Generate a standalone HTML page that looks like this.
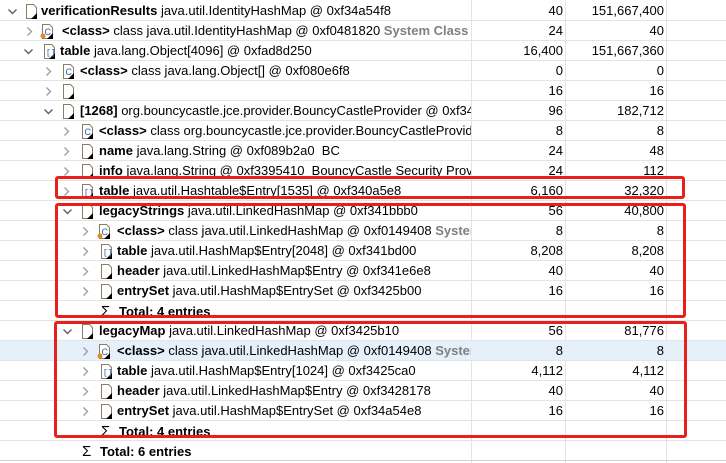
<!DOCTYPE html>
<html><head><meta charset="utf-8"><style>
body{margin:0;width:726px;height:463px;overflow:hidden;background:#fff;font-family:"Liberation Sans",sans-serif;font-size:13px;color:#000;position:relative}
.r{position:absolute;left:0;width:726px;height:20px;border-bottom:1px solid #e4e4e4;box-sizing:border-box}
.hl{background:#e5f0fb}
.c1{position:absolute;left:0;top:0;width:471px;height:19px;overflow:hidden;white-space:nowrap}
.t{position:absolute;top:2px;line-height:16px}
.n1,.n2{position:absolute;top:2px;line-height:16px;text-align:right}
.n1{right:163px}.n2{right:62px}
.sep{position:absolute;top:0;width:1px;height:463px;background:#e4e4e4}
b{font-weight:bold}
.sys{color:#808080;font-weight:bold}
svg{position:absolute;overflow:visible}
.box{position:absolute;border:3px solid #e8201c;border-radius:3px;box-sizing:border-box}
.sg{position:absolute;top:3px;font-size:15px;line-height:16px}
</style></head><body>
<div class="sep" style="left:471px"></div>
<div class="sep" style="left:565px"></div>
<div class="sep" style="left:666px"></div>

<div class="r" style="top:1px"><div class="c1"><svg style="left:8px;top:8px" width="9" height="6"><path d="M0.5 0.5L4.5 4.5L8.5 0.5" fill="none" stroke="#606060" stroke-width="1.4"/></svg><svg style="left:26px;top:3px" width="12" height="16"><path d="M0.5 0.5H7.5L10.5 3.5V14.5H0.5Z" fill="#fff" stroke="#8a7d60"/><path d="M5 15H11V9Z" fill="#000"/></svg><span class="t" style="left:41px"><b>verificationResults</b> java.util.IdentityHashMap @ 0xf34a54f8</span></div><span class="n1">40</span><span class="n2">151,667,400</span></div>

<div class="r" style="top:21px"><div class="c1"><svg style="left:27px;top:6px" width="6" height="10"><path d="M0.5 0.5L4.5 4.5L0.5 8.5" fill="none" stroke="#a0a0a0" stroke-width="1.4"/></svg><svg style="left:40px;top:3px" width="14" height="16"><path d="M2.5 0.5H9.5L12.5 3.5V14.5H2.5Z" fill="#fff" stroke="#8a7d60"/><path d="M7 15H13V9Z" fill="#000"/><text x="4.5" y="11" font-size="9" fill="#2a5db0" font-family="Liberation Sans">C</text><circle cx="3" cy="12" r="2.5" fill="#e08a2c"/></svg><span class="t" style="left:62px"><b>&lt;class&gt;</b> class java.util.IdentityHashMap @ 0xf0481820 <span class="sys">System Class</span></span></div><span class="n1">24</span><span class="n2">40</span></div>

<div class="r" style="top:41px"><div class="c1"><svg style="left:24px;top:8px" width="9" height="6"><path d="M0.5 0.5L4.5 4.5L8.5 0.5" fill="none" stroke="#606060" stroke-width="1.4"/></svg><svg style="left:44px;top:3px" width="12" height="16"><path d="M0.5 0.5H7.5L10.5 3.5V14.5H0.5Z" fill="#fff" stroke="#8a7d60"/><path d="M5 15H11V9Z" fill="#000"/><text x="2" y="11" font-size="8" fill="#2a5db0" font-family="Liberation Mono">[]</text></svg><span class="t" style="left:60px"><b>table</b> java.lang.Object[4096] @ 0xfad8d250</span></div><span class="n1">16,400</span><span class="n2">151,667,360</span></div>

<div class="r" style="top:61px"><div class="c1"><svg style="left:46px;top:6px" width="6" height="10"><path d="M0.5 0.5L4.5 4.5L0.5 8.5" fill="none" stroke="#a0a0a0" stroke-width="1.4"/></svg><svg style="left:63px;top:3px" width="12" height="16"><path d="M0.5 0.5H7.5L10.5 3.5V14.5H0.5Z" fill="#fff" stroke="#8a7d60"/><path d="M5 15H11V9Z" fill="#000"/><text x="2.5" y="11" font-size="9" fill="#2a5db0" font-family="Liberation Sans">C</text></svg><span class="t" style="left:80px"><b>&lt;class&gt;</b> class java.lang.Object[] @ 0xf080e6f8</span></div><span class="n1">0</span><span class="n2">0</span></div>

<div class="r" style="top:81px"><div class="c1"><svg style="left:46px;top:6px" width="6" height="10"><path d="M0.5 0.5L4.5 4.5L0.5 8.5" fill="none" stroke="#a0a0a0" stroke-width="1.4"/></svg><svg style="left:63px;top:3px" width="12" height="16"><path d="M0.5 0.5H7.5L10.5 3.5V14.5H0.5Z" fill="#fff" stroke="#8a7d60"/><path d="M5 15H11V9Z" fill="#000"/></svg></div><span class="n1">16</span><span class="n2">16</span></div>

<div class="r" style="top:101px"><div class="c1"><svg style="left:44px;top:8px" width="9" height="6"><path d="M0.5 0.5L4.5 4.5L8.5 0.5" fill="none" stroke="#606060" stroke-width="1.4"/></svg><svg style="left:63px;top:3px" width="12" height="16"><path d="M0.5 0.5H7.5L10.5 3.5V14.5H0.5Z" fill="#fff" stroke="#8a7d60"/><path d="M5 15H11V9Z" fill="#000"/></svg><span class="t" style="left:80px"><b>[1268]</b> org.bouncycastle.jce.provider.BouncyCastleProvider @ 0xf34a5</span></div><span class="n1">96</span><span class="n2">182,712</span></div>

<div class="r" style="top:121px"><div class="c1"><svg style="left:64px;top:6px" width="6" height="10"><path d="M0.5 0.5L4.5 4.5L0.5 8.5" fill="none" stroke="#a0a0a0" stroke-width="1.4"/></svg><svg style="left:82px;top:3px" width="12" height="16"><path d="M0.5 0.5H7.5L10.5 3.5V14.5H0.5Z" fill="#fff" stroke="#8a7d60"/><path d="M5 15H11V9Z" fill="#000"/><text x="2.5" y="11" font-size="9" fill="#2a5db0" font-family="Liberation Sans">C</text></svg><span class="t" style="left:99px"><b>&lt;class&gt;</b> class org.bouncycastle.jce.provider.BouncyCastleProvider</span></div><span class="n1">8</span><span class="n2">8</span></div>

<div class="r" style="top:141px"><div class="c1"><svg style="left:64px;top:6px" width="6" height="10"><path d="M0.5 0.5L4.5 4.5L0.5 8.5" fill="none" stroke="#a0a0a0" stroke-width="1.4"/></svg><svg style="left:82px;top:3px" width="12" height="16"><path d="M0.5 0.5H7.5L10.5 3.5V14.5H0.5Z" fill="#fff" stroke="#8a7d60"/><path d="M5 15H11V9Z" fill="#000"/></svg><span class="t" style="left:99px"><b>name</b> java.lang.String @ 0xf089b2a0&nbsp; BC</span></div><span class="n1">24</span><span class="n2">48</span></div>

<div class="r" style="top:161px"><div class="c1"><svg style="left:64px;top:6px" width="6" height="10"><path d="M0.5 0.5L4.5 4.5L0.5 8.5" fill="none" stroke="#a0a0a0" stroke-width="1.4"/></svg><svg style="left:82px;top:3px" width="12" height="16"><path d="M0.5 0.5H7.5L10.5 3.5V14.5H0.5Z" fill="#fff" stroke="#8a7d60"/><path d="M5 15H11V9Z" fill="#000"/></svg><span class="t" style="left:99px"><b>info</b> java.lang.String @ 0xf3395410&nbsp; BouncyCastle Security Provider</span></div><span class="n1">24</span><span class="n2">112</span></div>

<div class="r" style="top:181px"><div class="c1"><svg style="left:64px;top:6px" width="6" height="10"><path d="M0.5 0.5L4.5 4.5L0.5 8.5" fill="none" stroke="#a0a0a0" stroke-width="1.4"/></svg><svg style="left:82px;top:3px" width="12" height="16"><path d="M0.5 0.5H7.5L10.5 3.5V14.5H0.5Z" fill="#fff" stroke="#8a7d60"/><path d="M5 15H11V9Z" fill="#000"/><text x="2" y="11" font-size="8" fill="#2a5db0" font-family="Liberation Mono">[]</text></svg><span class="t" style="left:99px"><b>table</b> java.util.Hashtable$Entry[1535] @ 0xf340a5e8</span></div><span class="n1">6,160</span><span class="n2">32,320</span></div>

<div class="r" style="top:201px"><div class="c1"><svg style="left:63px;top:8px" width="9" height="6"><path d="M0.5 0.5L4.5 4.5L8.5 0.5" fill="none" stroke="#606060" stroke-width="1.4"/></svg><svg style="left:82px;top:3px" width="12" height="16"><path d="M0.5 0.5H7.5L10.5 3.5V14.5H0.5Z" fill="#fff" stroke="#8a7d60"/><path d="M5 15H11V9Z" fill="#000"/></svg><span class="t" style="left:99px"><b>legacyStrings</b> java.util.LinkedHashMap @ 0xf341bbb0</span></div><span class="n1">56</span><span class="n2">40,800</span></div>

<div class="r" style="top:221px"><div class="c1"><svg style="left:83px;top:6px" width="6" height="10"><path d="M0.5 0.5L4.5 4.5L0.5 8.5" fill="none" stroke="#a0a0a0" stroke-width="1.4"/></svg><svg style="left:97px;top:3px" width="14" height="16"><path d="M2.5 0.5H9.5L12.5 3.5V14.5H2.5Z" fill="#fff" stroke="#8a7d60"/><path d="M7 15H13V9Z" fill="#000"/><text x="4.5" y="11" font-size="9" fill="#2a5db0" font-family="Liberation Sans">C</text><circle cx="3" cy="12" r="2.5" fill="#e08a2c"/></svg><span class="t" style="left:117px"><b>&lt;class&gt;</b> class java.util.LinkedHashMap @ 0xf0149408 <span class="sys">System Class</span></span></div><span class="n1">8</span><span class="n2">8</span></div>

<div class="r" style="top:241px"><div class="c1"><svg style="left:83px;top:6px" width="6" height="10"><path d="M0.5 0.5L4.5 4.5L0.5 8.5" fill="none" stroke="#a0a0a0" stroke-width="1.4"/></svg><svg style="left:101px;top:3px" width="12" height="16"><path d="M0.5 0.5H7.5L10.5 3.5V14.5H0.5Z" fill="#fff" stroke="#8a7d60"/><path d="M5 15H11V9Z" fill="#000"/><text x="2" y="11" font-size="8" fill="#2a5db0" font-family="Liberation Mono">[]</text></svg><span class="t" style="left:117px"><b>table</b> java.util.HashMap$Entry[2048] @ 0xf341bd00</span></div><span class="n1">8,208</span><span class="n2">8,208</span></div>

<div class="r" style="top:261px"><div class="c1"><svg style="left:83px;top:6px" width="6" height="10"><path d="M0.5 0.5L4.5 4.5L0.5 8.5" fill="none" stroke="#a0a0a0" stroke-width="1.4"/></svg><svg style="left:101px;top:3px" width="12" height="16"><path d="M0.5 0.5H7.5L10.5 3.5V14.5H0.5Z" fill="#fff" stroke="#8a7d60"/><path d="M5 15H11V9Z" fill="#000"/></svg><span class="t" style="left:117px"><b>header</b> java.util.LinkedHashMap$Entry @ 0xf341e6e8</span></div><span class="n1">40</span><span class="n2">40</span></div>

<div class="r" style="top:281px"><div class="c1"><svg style="left:83px;top:6px" width="6" height="10"><path d="M0.5 0.5L4.5 4.5L0.5 8.5" fill="none" stroke="#a0a0a0" stroke-width="1.4"/></svg><svg style="left:101px;top:3px" width="12" height="16"><path d="M0.5 0.5H7.5L10.5 3.5V14.5H0.5Z" fill="#fff" stroke="#8a7d60"/><path d="M5 15H11V9Z" fill="#000"/></svg><span class="t" style="left:117px"><b>entrySet</b> java.util.HashMap$EntrySet @ 0xf3425b00</span></div><span class="n1">16</span><span class="n2">16</span></div>

<div class="r" style="top:301px"><div class="c1"><span class="sg" style="left:101px">Σ</span><span class="t" style="left:119px;top:3px"><b>Total: 4 entries</b></span></div></div>

<div class="r" style="top:321px"><div class="c1"><svg style="left:63px;top:8px" width="9" height="6"><path d="M0.5 0.5L4.5 4.5L8.5 0.5" fill="none" stroke="#606060" stroke-width="1.4"/></svg><svg style="left:82px;top:3px" width="12" height="16"><path d="M0.5 0.5H7.5L10.5 3.5V14.5H0.5Z" fill="#fff" stroke="#8a7d60"/><path d="M5 15H11V9Z" fill="#000"/></svg><span class="t" style="left:99px"><b>legacyMap</b> java.util.LinkedHashMap @ 0xf3425b10</span></div><span class="n1">56</span><span class="n2">81,776</span></div>

<div class="r hl" style="top:341px"><div class="c1"><svg style="left:83px;top:6px" width="6" height="10"><path d="M0.5 0.5L4.5 4.5L0.5 8.5" fill="none" stroke="#a0a0a0" stroke-width="1.4"/></svg><svg style="left:97px;top:3px" width="14" height="16"><path d="M2.5 0.5H9.5L12.5 3.5V14.5H2.5Z" fill="#fff" stroke="#8a7d60"/><path d="M7 15H13V9Z" fill="#000"/><text x="4.5" y="11" font-size="9" fill="#2a5db0" font-family="Liberation Sans">C</text><circle cx="3" cy="12" r="2.5" fill="#e08a2c"/></svg><span class="t" style="left:117px"><b>&lt;class&gt;</b> class java.util.LinkedHashMap @ 0xf0149408 <span class="sys">System Class</span></span></div><span class="n1">8</span><span class="n2">8</span></div>

<div class="r" style="top:361px"><div class="c1"><svg style="left:83px;top:6px" width="6" height="10"><path d="M0.5 0.5L4.5 4.5L0.5 8.5" fill="none" stroke="#a0a0a0" stroke-width="1.4"/></svg><svg style="left:101px;top:3px" width="12" height="16"><path d="M0.5 0.5H7.5L10.5 3.5V14.5H0.5Z" fill="#fff" stroke="#8a7d60"/><path d="M5 15H11V9Z" fill="#000"/><text x="2" y="11" font-size="8" fill="#2a5db0" font-family="Liberation Mono">[]</text></svg><span class="t" style="left:117px"><b>table</b> java.util.HashMap$Entry[1024] @ 0xf3425ca0</span></div><span class="n1">4,112</span><span class="n2">4,112</span></div>

<div class="r" style="top:381px"><div class="c1"><svg style="left:83px;top:6px" width="6" height="10"><path d="M0.5 0.5L4.5 4.5L0.5 8.5" fill="none" stroke="#a0a0a0" stroke-width="1.4"/></svg><svg style="left:101px;top:3px" width="12" height="16"><path d="M0.5 0.5H7.5L10.5 3.5V14.5H0.5Z" fill="#fff" stroke="#8a7d60"/><path d="M5 15H11V9Z" fill="#000"/></svg><span class="t" style="left:117px"><b>header</b> java.util.LinkedHashMap$Entry @ 0xf3428178</span></div><span class="n1">40</span><span class="n2">40</span></div>

<div class="r" style="top:401px"><div class="c1"><svg style="left:83px;top:6px" width="6" height="10"><path d="M0.5 0.5L4.5 4.5L0.5 8.5" fill="none" stroke="#a0a0a0" stroke-width="1.4"/></svg><svg style="left:101px;top:3px" width="12" height="16"><path d="M0.5 0.5H7.5L10.5 3.5V14.5H0.5Z" fill="#fff" stroke="#8a7d60"/><path d="M5 15H11V9Z" fill="#000"/></svg><span class="t" style="left:117px"><b>entrySet</b> java.util.HashMap$EntrySet @ 0xf34a54e8</span></div><span class="n1">16</span><span class="n2">16</span></div>

<div class="r" style="top:421px"><div class="c1"><span class="sg" style="left:101px">Σ</span><span class="t" style="left:119px;top:3px"><b>Total: 4 entries</b></span></div></div>

<div class="r" style="top:441px;border-bottom-color:#d0d0d0"><div class="c1"><span class="sg" style="left:82px">Σ</span><span class="t" style="left:100px;top:3px"><b>Total: 6 entries</b></span></div></div>

<div class="box" style="left:55px;top:176px;width:630px;height:23px"></div>
<div class="box" style="left:55px;top:203px;width:631px;height:115px"></div>
<div class="box" style="left:54px;top:321px;width:633px;height:117px"></div>
</body></html>
